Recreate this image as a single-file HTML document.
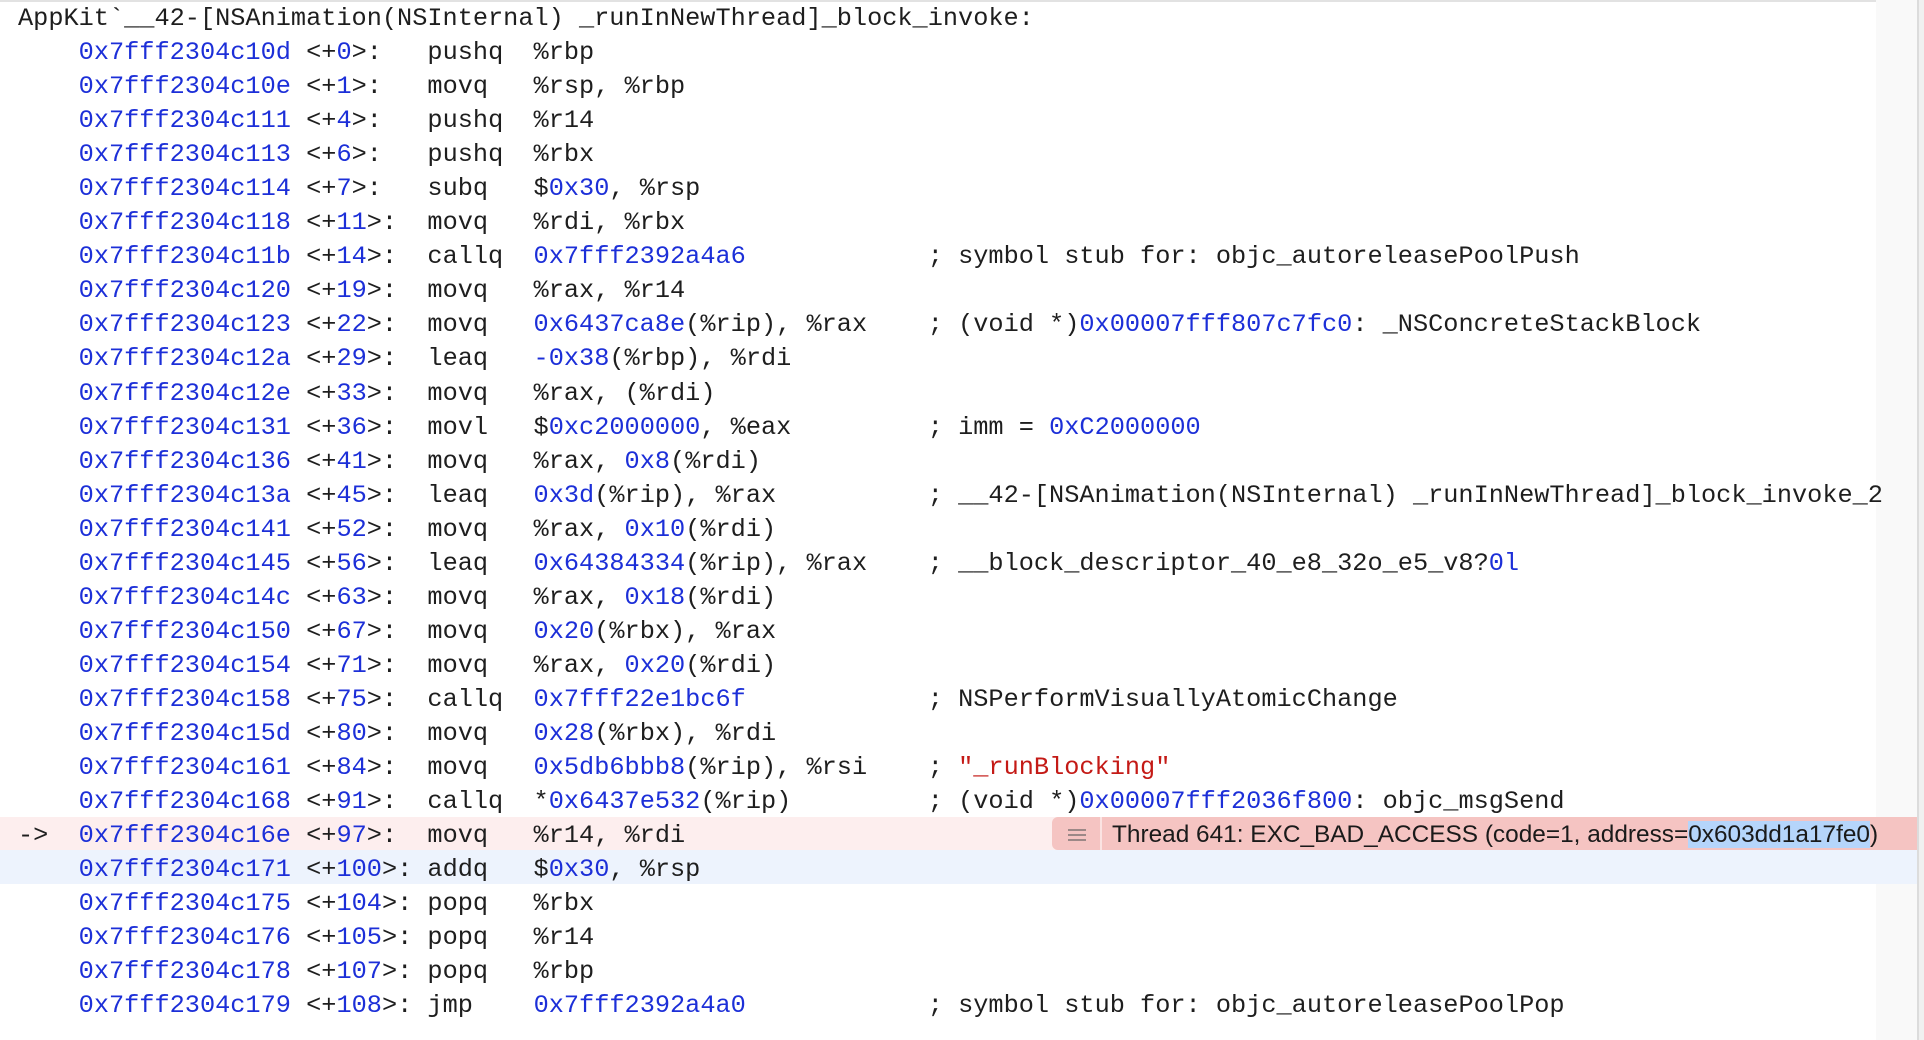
<!DOCTYPE html>
<html><head><meta charset="utf-8"><style>
html,body{margin:0;padding:0;width:1924px;height:1040px;overflow:hidden;background:#fff}
.top{position:absolute;left:0;top:0;width:1924px;height:2px;background:#e2e2e2}
.sb1{position:absolute;left:1876px;top:0;width:41px;height:1040px;background:#f9f9f9}
.sb2{position:absolute;left:1917px;top:0;width:2px;height:1040px;background:#dcdcdc}
.sb3{position:absolute;left:1919px;top:0;width:5px;height:1040px;background:#f0f0f0}
.row{position:absolute;left:0;height:34px;width:1917px}
pre{position:absolute;left:18px;top:2px;margin:0;font-family:"Liberation Mono",monospace;font-size:25.27px;line-height:34.05px;color:#1e1e1e;white-space:pre}
b{font-weight:normal;color:#1c2fd8}
i{font-style:normal;color:#c41a16}
.banner{position:absolute;left:1052px;top:817px;width:865px;height:33px;background:#f5c4c2;border-radius:6px 0 0 6px}
.bsep{position:absolute;left:1100px;top:817px;width:2px;height:33px;background:#fbe3e2}
.bicon{position:absolute;left:1068px;top:829px;width:18px}
.bicon div{height:2px;background:#9c8887;margin-bottom:3px}
.btxt{position:absolute;left:1112px;top:818px;line-height:33px;font-family:"Liberation Sans",sans-serif;font-size:24.4px;color:#1a1a1a;white-space:pre}
.sel{background:#b5d5fb}
</style></head><body>
<div class="top"></div>
<div class="sb1"></div><div class="sb2"></div><div class="sb3"></div>
<div class="row" style="top:817px;background:#fdeeee"></div>
<div class="row" style="top:850px;height:34px;background:#edf3fd"></div>
<pre>AppKit`__42-[NSAnimation(NSInternal) _runInNewThread]_block_invoke:
    <b>0x7fff2304c10d</b> &lt;+<b>0</b>&gt;:   pushq  %rbp
    <b>0x7fff2304c10e</b> &lt;+<b>1</b>&gt;:   movq   %rsp, %rbp
    <b>0x7fff2304c111</b> &lt;+<b>4</b>&gt;:   pushq  %r14
    <b>0x7fff2304c113</b> &lt;+<b>6</b>&gt;:   pushq  %rbx
    <b>0x7fff2304c114</b> &lt;+<b>7</b>&gt;:   subq   $<b>0x30</b>, %rsp
    <b>0x7fff2304c118</b> &lt;+<b>11</b>&gt;:  movq   %rdi, %rbx
    <b>0x7fff2304c11b</b> &lt;+<b>14</b>&gt;:  callq  <b>0x7fff2392a4a6</b>            ; symbol stub for: objc_autoreleasePoolPush
    <b>0x7fff2304c120</b> &lt;+<b>19</b>&gt;:  movq   %rax, %r14
    <b>0x7fff2304c123</b> &lt;+<b>22</b>&gt;:  movq   <b>0x6437ca8e</b>(%rip), %rax    ; (void *)<b>0x00007fff807c7fc0</b>: _NSConcreteStackBlock
    <b>0x7fff2304c12a</b> &lt;+<b>29</b>&gt;:  leaq   <b>-0x38</b>(%rbp), %rdi
    <b>0x7fff2304c12e</b> &lt;+<b>33</b>&gt;:  movq   %rax, (%rdi)
    <b>0x7fff2304c131</b> &lt;+<b>36</b>&gt;:  movl   $<b>0xc2000000</b>, %eax         ; imm = <b>0xC2000000</b>
    <b>0x7fff2304c136</b> &lt;+<b>41</b>&gt;:  movq   %rax, <b>0x8</b>(%rdi)
    <b>0x7fff2304c13a</b> &lt;+<b>45</b>&gt;:  leaq   <b>0x3d</b>(%rip), %rax          ; __42-[NSAnimation(NSInternal) _runInNewThread]_block_invoke_2
    <b>0x7fff2304c141</b> &lt;+<b>52</b>&gt;:  movq   %rax, <b>0x10</b>(%rdi)
    <b>0x7fff2304c145</b> &lt;+<b>56</b>&gt;:  leaq   <b>0x64384334</b>(%rip), %rax    ; __block_descriptor_40_e8_32o_e5_v8?<b>0l</b>
    <b>0x7fff2304c14c</b> &lt;+<b>63</b>&gt;:  movq   %rax, <b>0x18</b>(%rdi)
    <b>0x7fff2304c150</b> &lt;+<b>67</b>&gt;:  movq   <b>0x20</b>(%rbx), %rax
    <b>0x7fff2304c154</b> &lt;+<b>71</b>&gt;:  movq   %rax, <b>0x20</b>(%rdi)
    <b>0x7fff2304c158</b> &lt;+<b>75</b>&gt;:  callq  <b>0x7fff22e1bc6f</b>            ; NSPerformVisuallyAtomicChange
    <b>0x7fff2304c15d</b> &lt;+<b>80</b>&gt;:  movq   <b>0x28</b>(%rbx), %rdi
    <b>0x7fff2304c161</b> &lt;+<b>84</b>&gt;:  movq   <b>0x5db6bbb8</b>(%rip), %rsi    ; <i>"_runBlocking"</i>
    <b>0x7fff2304c168</b> &lt;+<b>91</b>&gt;:  callq  *<b>0x6437e532</b>(%rip)         ; (void *)<b>0x00007fff2036f800</b>: objc_msgSend
->  <b>0x7fff2304c16e</b> &lt;+<b>97</b>&gt;:  movq   %r14, %rdi
    <b>0x7fff2304c171</b> &lt;+<b>100</b>&gt;: addq   $<b>0x30</b>, %rsp
    <b>0x7fff2304c175</b> &lt;+<b>104</b>&gt;: popq   %rbx
    <b>0x7fff2304c176</b> &lt;+<b>105</b>&gt;: popq   %r14
    <b>0x7fff2304c178</b> &lt;+<b>107</b>&gt;: popq   %rbp
    <b>0x7fff2304c179</b> &lt;+<b>108</b>&gt;: jmp    <b>0x7fff2392a4a0</b>            ; symbol stub for: objc_autoreleasePoolPop</pre>
<div class="banner"></div>
<div class="bsep"></div>
<div class="bicon"><div></div><div></div><div></div></div>
<div class="btxt">Thread 641: EXC_BAD_ACCESS (code=1, address=<span class="sel">0x603dd1a17fe0</span>)</div>
</body></html>
